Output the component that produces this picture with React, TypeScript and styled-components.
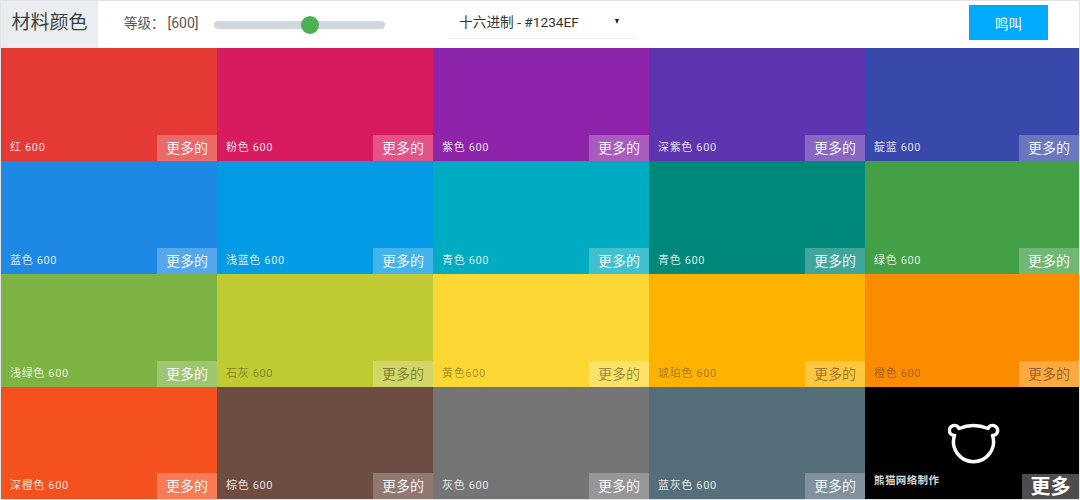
import styled, { createGlobalStyle } from 'styled-components';

const GlobalStyle = createGlobalStyle`
  html, body {
    margin: 0;
    padding: 0;
    background: #fff;
  }
  * {
    box-sizing: border-box;
  }
`;

const FONT = `Roboto, "Noto Sans CJK SC", sans-serif`;

const Page = styled.div`
  width: 1080px;
  height: 500px;
  display: flex;
  flex-direction: column;
  overflow: hidden;
  border: 1px solid #e2e3e4;
  font-family: ${FONT};
  background: #fff;
`;

const Toolbar = styled.header`
  height: 47px;
  flex: none;
  display: flex;
  align-items: stretch;
`;

const Title = styled.h1`
  width: 97px;
  margin: 0;
  background: #ebeef0;
  color: #3c3f42;
  font-size: 19px;
  font-weight: 400;
  line-height: 43px;
  text-align: center;
`;

const LevelGroup = styled.div`
  width: 350px;
  display: flex;
  align-items: center;
  padding-left: 26px;
  gap: 15px;
`;

const LevelLabel = styled.span`
  width: 75px;
  color: #55585b;
  font-size: 13.5px;
  line-height: 44px;
  margin-top: -3px;
  white-space: nowrap;
`;

const LevelValue = styled.span`
  margin-left: 3px;
  font-size: 14px;
`;

const SliderTrack = styled.div`
  position: relative;
  width: 171px;
  height: 8px;
  border-radius: 4px;
  background: #cfd8dc;
`;

const SliderThumb = styled.div`
  position: absolute;
  top: -5px;
  width: 18px;
  height: 18px;
  border-radius: 50%;
  background: #4caf50;
`;

const SelectBox = styled.div`
  width: 188px;
  height: 38px;
  display: flex;
  align-items: center;
  justify-content: space-between;
  padding: 3px 17px 0 11px;
  border-bottom: 1px solid #eff0f1;
  color: #333;
  font-size: 13.7px;
`;

const Caret = styled.span`
  width: 0;
  height: 0;
  border-left: 2.5px solid transparent;
  border-right: 2.5px solid transparent;
  border-top: 5px solid #222;
`;

const ButtonSlot = styled.div`
  margin-left: auto;
  padding: 4px 31px 0 0;
`;

const HowlButton = styled.button`
  display: block;
  width: 79px;
  height: 35px;
  border: 0;
  padding: 0;
  background: #00aaff;
  color: #fff;
  font-family: ${FONT};
  font-size: 13.5px;
`;

const Grid = styled.main`
  flex: 1;
  display: grid;
  grid-template-columns: repeat(4, 216px) 214px;
  grid-template-rows: repeat(3, 113px) 112px;
`;

const Tile = styled.section<{ $bg: string; $dark: boolean }>`
  display: flex;
  align-items: flex-end;
  justify-content: space-between;
  background: ${(p) => p.$bg};
  color: ${(p) => (p.$dark ? 'rgba(0, 0, 0, 0.36)' : 'rgba(255, 255, 255, 0.85)')};
`;

const ColorName = styled.span`
  padding: 0 0 6px 9px;
  font-size: 11px;
  line-height: 15px;
  letter-spacing: 0.65px;
  white-space: nowrap;
`;

const MoreButton = styled.span<{ $dark: boolean }>`
  width: 60px;
  height: 26px;
  background: rgba(255, 255, 255, 0.25);
  color: ${(p) => (p.$dark ? 'rgba(0, 0, 0, 0.42)' : 'rgba(255, 255, 255, 0.95)')};
  font-size: 14px;
  line-height: 26px;
  text-align: center;
`;

const LogoTile = styled.section`
  position: relative;
  display: flex;
  align-items: flex-end;
  justify-content: space-between;
  background: #000;
  color: #fff;
`;

const BearLogo = styled.svg`
  position: absolute;
  left: 83px;
  top: 34px;
`;

const MakerName = styled.span`
  padding: 0 0 11px 9px;
  color: rgba(255, 255, 255, 0.85);
  font-size: 10.5px;
  font-weight: 700;
  line-height: 15px;
  letter-spacing: 0.4px;
`;

const LogoMore = styled.span`
  width: 57px;
  height: 25px;
  background: #4d4d4d;
  font-size: 20px;
  font-weight: 700;
  line-height: 27px;
  text-align: center;
`;

type Swatch = { name: string; color: string; dark?: boolean };

const swatches: Swatch[] = [
  { name: '红 600', color: '#e53935' },
  { name: '粉色 600', color: '#d81b60' },
  { name: '紫色 600', color: '#8e24aa' },
  { name: '深紫色 600', color: '#5e35b1' },
  { name: '靛蓝 600', color: '#3949ab' },
  { name: '蓝色 600', color: '#1e88e5' },
  { name: '浅蓝色 600', color: '#039be5' },
  { name: '青色 600', color: '#00acc1' },
  { name: '青色 600', color: '#00897b' },
  { name: '绿色 600', color: '#43a047' },
  { name: '浅绿色 600', color: '#7cb342' },
  { name: '石灰 600', color: '#c0ca33', dark: true },
  { name: '黄色600', color: '#fdd835', dark: true },
  { name: '琥珀色 600', color: '#ffb300', dark: true },
  { name: '橙色 600', color: '#fb8c00', dark: true },
  { name: '深橙色 600', color: '#f4511e' },
  { name: '棕色 600', color: '#6d4c41' },
  { name: '灰色 600', color: '#757575' },
  { name: '蓝灰色 600', color: '#546e7a' },
];

const level = 600;
const levelPercent = 0.51;

export default function App() {
  return (
    <>
      <GlobalStyle />
      <Page>
        <Toolbar>
          <Title>材料颜色</Title>
          <LevelGroup>
            <LevelLabel>
              等级：<LevelValue>[{level}]</LevelValue>
            </LevelLabel>
            <SliderTrack>
              <SliderThumb style={{ left: `${levelPercent * 100}%` }} />
            </SliderTrack>
          </LevelGroup>
          <SelectBox>
            <span>十六进制 - #1234EF</span>
            <Caret />
          </SelectBox>
          <ButtonSlot>
            <HowlButton>鸣叫</HowlButton>
          </ButtonSlot>
        </Toolbar>
        <Grid>
          {swatches.map((s) => (
            <Tile key={s.color} $bg={s.color} $dark={!!s.dark}>
              <ColorName>{s.name}</ColorName>
              <MoreButton $dark={!!s.dark}>更多的</MoreButton>
            </Tile>
          ))}
          <LogoTile>
            <BearLogo width="52" height="44" viewBox="0 0 52 44" fill="none">
              <path
                d="M11 7.5 Q25.5 1.5 40 7.5 A5 5 0 1 1 44.5 14.4 A20 20 0 1 1 6.5 14.4 A5 5 0 1 1 11 7.5 Z"
                stroke="#fff"
                strokeWidth="3.5"
                strokeLinejoin="round"
              />
            </BearLogo>
            <MakerName>熊猫网络制作</MakerName>
            <LogoMore>更多</LogoMore>
          </LogoTile>
        </Grid>
      </Page>
    </>
  );
}
